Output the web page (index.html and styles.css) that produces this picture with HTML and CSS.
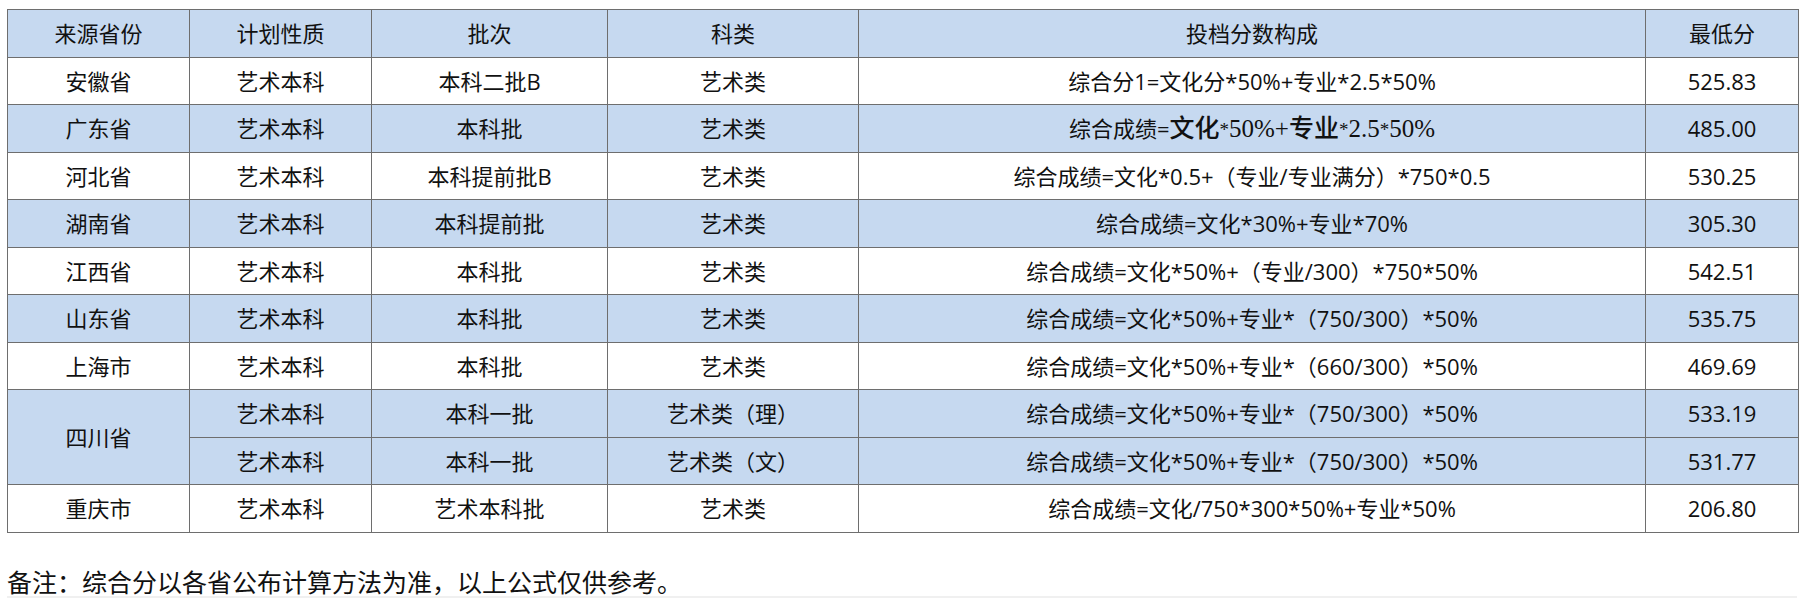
FILE: index.html
```html
<!DOCTYPE html>
<html lang="zh-CN">
<head>
<meta charset="utf-8">
<title>艺术类录取分数</title>
<link rel="stylesheet" href="styles.css">
</head>
<body>
<table class="score-table">
  <colgroup>
    <col class="c1"><col class="c2"><col class="c3"><col class="c4"><col class="c5"><col class="c6">
  </colgroup>
  <tr class="blue">
    <td>来源省份</td><td>计划性质</td><td>批次</td><td>科类</td><td>投档分数构成</td><td>最低分</td>
  </tr>
  <tr>
    <td>安徽省</td><td>艺术本科</td><td>本科二批B</td><td>艺术类</td><td>综合分1=文化分*50%+专业*2.5*50%</td><td>525.83</td>
  </tr>
  <tr class="blue">
    <td>广东省</td><td>艺术本科</td><td>本科批</td><td>艺术类</td><td>综合成绩=<span class="big">文化</span><span class="serif"><span class="ast">*</span>50%+</span><span class="big">专业</span><span class="serif"><span class="ast">*</span>2.5<span class="ast">*</span>50%</span></td><td>485.00</td>
  </tr>
  <tr>
    <td>河北省</td><td>艺术本科</td><td>本科提前批B</td><td>艺术类</td><td>综合成绩=文化*0.5+（专业/专业满分）*750*0.5</td><td>530.25</td>
  </tr>
  <tr class="blue">
    <td>湖南省</td><td>艺术本科</td><td>本科提前批</td><td>艺术类</td><td>综合成绩=文化*30%+专业*70%</td><td>305.30</td>
  </tr>
  <tr>
    <td>江西省</td><td>艺术本科</td><td>本科批</td><td>艺术类</td><td>综合成绩=文化*50%+（专业/300）*750*50%</td><td>542.51</td>
  </tr>
  <tr class="blue">
    <td>山东省</td><td>艺术本科</td><td>本科批</td><td>艺术类</td><td>综合成绩=文化*50%+专业*（750/300）*50%</td><td>535.75</td>
  </tr>
  <tr>
    <td>上海市</td><td>艺术本科</td><td>本科批</td><td>艺术类</td><td>综合成绩=文化*50%+专业*（660/300）*50%</td><td>469.69</td>
  </tr>
  <tr class="blue">
    <td rowspan="2">四川省</td><td>艺术本科</td><td>本科一批</td><td>艺术类（理）</td><td>综合成绩=文化*50%+专业*（750/300）*50%</td><td>533.19</td>
  </tr>
  <tr class="blue">
    <td>艺术本科</td><td>本科一批</td><td>艺术类（文）</td><td>综合成绩=文化*50%+专业*（750/300）*50%</td><td>531.77</td>
  </tr>
  <tr>
    <td>重庆市</td><td>艺术本科</td><td>艺术本科批</td><td>艺术类</td><td>综合成绩=文化/750*300*50%+专业*50%</td><td>206.80</td>
  </tr>
</table>
<p class="note">备注：综合分以各省公布计算方法为准，以上公式仅供参考。</p>
<div class="bar"></div>
</body>
</html>
```
FILE: styles.css
```css
html, body {
  margin: 0;
  padding: 0;
  background: #ffffff;
}
body {
  padding: 9px 8px 0 7px;
  font-family: "Open Sans", "Noto Sans CJK SC", sans-serif;
  color: #111;
}
.score-table {
  width: 1791px;
  border-collapse: collapse;
  table-layout: fixed;
  font-size: 22px;
}
.c1 { width: 182px; }
.c2 { width: 182px; }
.c3 { width: 236px; }
.c4 { width: 251px; }
.c5 { width: 787px; }
.c6 { width: 153px; }
.score-table td {
  border: 1px solid #6e6e6e;
  height: 46.5px;
  padding: 0 4px;
  line-height: 30px;
  text-align: center;
  vertical-align: middle;
  white-space: nowrap;
}
.score-table tr.blue td {
  background: #c6d9f0;
}
.big {
  font-family: "Noto Sans CJK SC", sans-serif;
  font-size: 25px;
  font-weight: 500;
}
.serif {
  font-family: "Liberation Serif", "Times New Roman", serif;
  font-size: 25px;
}
.ast {
  font-size: 19px;
  vertical-align: 1px;
}
.note {
  margin: 35px 0 0 0;
  font-family: "Noto Sans CJK SC", sans-serif;
  font-size: 25px;
  line-height: 26px;
  color: #111;
}
.bar {
  margin-top: 2px;
  height: 10px;
  background: #f0f0f0;
}
```
